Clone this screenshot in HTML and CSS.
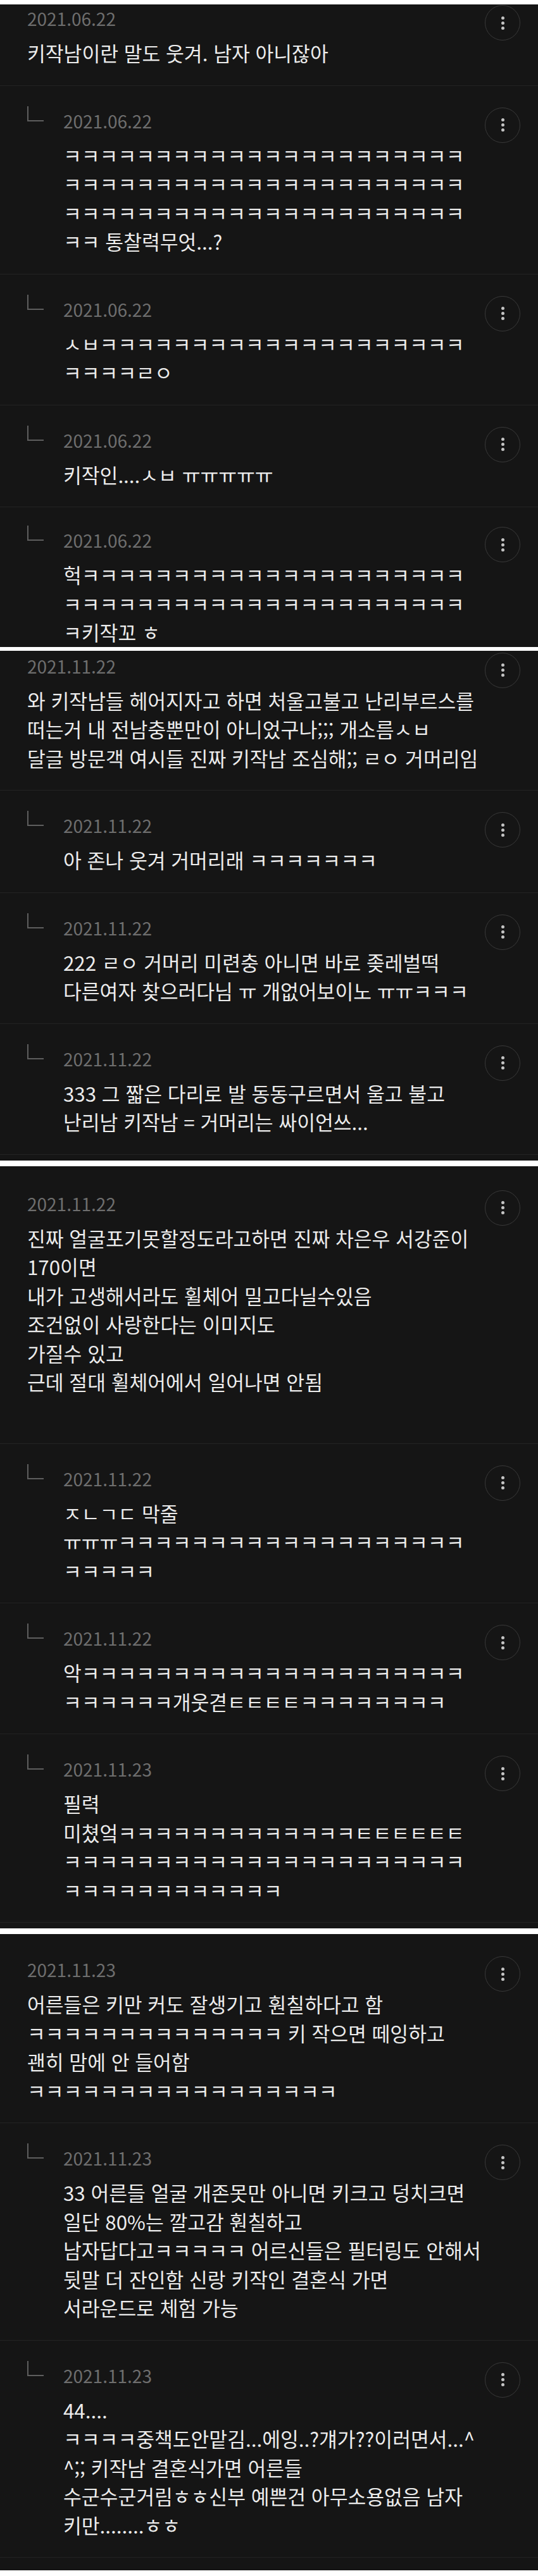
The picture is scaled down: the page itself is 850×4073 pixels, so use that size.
FILE: index.html
```html
<!DOCTYPE html>
<html lang="ko">
<head>
    <meta charset="UTF-8">
    <meta name="viewport" content="width=device-width, initial-scale=1.0">
    <title>키작남 댓글 모음</title>
    <link rel="stylesheet" href="styles.css">
</head>
<body>
    <!-- 1 -->
    <section class="shot cropped">
        <article class="comment first-cut">
            <div class="comment-body">
                <div class="comment-head">
                    <time class="comment-date">2021.06.22</time>
                    <button class="more-btn" aria-label="더보기"><i></i><i></i><i></i></button>
                </div>
                <p class="comment-text">키작남이란 말도 웃겨. 남자 아니잖아</p>
            </div>
        </article>
        <article class="comment reply">
            <svg class="reply-mark" viewBox="0 0 26 24"><path d="M1 0V23H26"/></svg>
            <div class="comment-body">
                <div class="comment-head">
                    <time class="comment-date">2021.06.22</time>
                    <button class="more-btn" aria-label="더보기"><i></i><i></i><i></i></button>
                </div>
                <p class="comment-text">ㅋㅋㅋㅋㅋㅋㅋㅋㅋㅋㅋㅋㅋㅋㅋㅋㅋㅋㅋㅋㅋㅋ<br>ㅋㅋㅋㅋㅋㅋㅋㅋㅋㅋㅋㅋㅋㅋㅋㅋㅋㅋㅋㅋㅋㅋ<br>ㅋㅋㅋㅋㅋㅋㅋㅋㅋㅋㅋㅋㅋㅋㅋㅋㅋㅋㅋㅋㅋㅋ<br>ㅋㅋ 통찰력무엇...?</p>
            </div>
        </article>
        <article class="comment reply">
            <svg class="reply-mark" viewBox="0 0 26 24"><path d="M1 0V23H26"/></svg>
            <div class="comment-body">
                <div class="comment-head">
                    <time class="comment-date">2021.06.22</time>
                    <button class="more-btn" aria-label="더보기"><i></i><i></i><i></i></button>
                </div>
                <p class="comment-text">ㅅㅂㅋㅋㅋㅋㅋㅋㅋㅋㅋㅋㅋㅋㅋㅋㅋㅋㅋㅋㅋㅋ<br>ㅋㅋㅋㅋㄹㅇ</p>
            </div>
        </article>
        <article class="comment reply">
            <svg class="reply-mark" viewBox="0 0 26 24"><path d="M1 0V23H26"/></svg>
            <div class="comment-body">
                <div class="comment-head">
                    <time class="comment-date">2021.06.22</time>
                    <button class="more-btn" aria-label="더보기"><i></i><i></i><i></i></button>
                </div>
                <p class="comment-text">키작인....ㅅㅂ ㅠㅠㅠㅠㅠ</p>
            </div>
        </article>
        <article class="comment reply last-cut">
            <svg class="reply-mark" viewBox="0 0 26 24"><path d="M1 0V23H26"/></svg>
            <div class="comment-body">
                <div class="comment-head">
                    <time class="comment-date">2021.06.22</time>
                    <button class="more-btn" aria-label="더보기"><i></i><i></i><i></i></button>
                </div>
                <p class="comment-text">헉ㅋㅋㅋㅋㅋㅋㅋㅋㅋㅋㅋㅋㅋㅋㅋㅋㅋㅋㅋㅋㅋ<br>ㅋㅋㅋㅋㅋㅋㅋㅋㅋㅋㅋㅋㅋㅋㅋㅋㅋㅋㅋㅋㅋㅋ<br>ㅋ키작꼬 ㅎ</p>
            </div>
        </article>
    </section>

    <!-- 2 -->
    <section class="shot">
        <article class="comment first-cut loose">
            <div class="comment-body">
                <div class="comment-head">
                    <time class="comment-date">2021.11.22</time>
                    <button class="more-btn" aria-label="더보기"><i></i><i></i><i></i></button>
                </div>
                <p class="comment-text">와 키작남들 헤어지자고 하면 처울고불고 난리부르스를<br>떠는거 내 전남충뿐만이 아니었구나;;; 개소름ㅅㅂ<br>달글 방문객 여시들 진짜 키작남 조심해;; ㄹㅇ 거머리임</p>
            </div>
        </article>
        <article class="comment reply">
            <svg class="reply-mark" viewBox="0 0 26 24"><path d="M1 0V23H26"/></svg>
            <div class="comment-body">
                <div class="comment-head">
                    <time class="comment-date">2021.11.22</time>
                    <button class="more-btn" aria-label="더보기"><i></i><i></i><i></i></button>
                </div>
                <p class="comment-text">아 존나 웃겨 거머리래 ㅋㅋㅋㅋㅋㅋㅋ</p>
            </div>
        </article>
        <article class="comment reply">
            <svg class="reply-mark" viewBox="0 0 26 24"><path d="M1 0V23H26"/></svg>
            <div class="comment-body">
                <div class="comment-head">
                    <time class="comment-date">2021.11.22</time>
                    <button class="more-btn" aria-label="더보기"><i></i><i></i><i></i></button>
                </div>
                <p class="comment-text">222 ㄹㅇ 거머리 미련충 아니면 바로 좆레벌떡<br>다른여자 찾으러다님 ㅠ 개없어보이노 ㅠㅠㅋㅋㅋ</p>
            </div>
        </article>
        <article class="comment reply">
            <svg class="reply-mark" viewBox="0 0 26 24"><path d="M1 0V23H26"/></svg>
            <div class="comment-body">
                <div class="comment-head">
                    <time class="comment-date">2021.11.22</time>
                    <button class="more-btn" aria-label="더보기"><i></i><i></i><i></i></button>
                </div>
                <p class="comment-text">333 그 짧은 다리로 발 동동구르면서 울고 불고<br>난리남 키작남 = 거머리는 싸이언쓰...</p>
            </div>
        </article>
    </section>

    <!-- 3 -->
    <section class="shot">
        <article class="comment first roomy">
            <div class="comment-body">
                <div class="comment-head">
                    <time class="comment-date">2021.11.22</time>
                    <button class="more-btn" aria-label="더보기"><i></i><i></i><i></i></button>
                </div>
                <p class="comment-text">진짜 얼굴포기못할정도라고하면 진짜 차은우 서강준이<br>170이면<br>내가 고생해서라도 휠체어 밀고다닐수있음<br>조건없이 사랑한다는 이미지도<br>가질수 있고<br>근데 절대 휠체어에서 일어나면 안됨</p>
            </div>
        </article>
        <article class="comment reply">
            <svg class="reply-mark" viewBox="0 0 26 24"><path d="M1 0V23H26"/></svg>
            <div class="comment-body">
                <div class="comment-head">
                    <time class="comment-date">2021.11.22</time>
                    <button class="more-btn" aria-label="더보기"><i></i><i></i><i></i></button>
                </div>
                <p class="comment-text">ㅈㄴㄱㄷ 막줄<br>ㅠㅠㅠㅋㅋㅋㅋㅋㅋㅋㅋㅋㅋㅋㅋㅋㅋㅋㅋㅋㅋㅋ<br>ㅋㅋㅋㅋㅋ</p>
            </div>
        </article>
        <article class="comment reply">
            <svg class="reply-mark" viewBox="0 0 26 24"><path d="M1 0V23H26"/></svg>
            <div class="comment-body">
                <div class="comment-head">
                    <time class="comment-date">2021.11.22</time>
                    <button class="more-btn" aria-label="더보기"><i></i><i></i><i></i></button>
                </div>
                <p class="comment-text">악ㅋㅋㅋㅋㅋㅋㅋㅋㅋㅋㅋㅋㅋㅋㅋㅋㅋㅋㅋㅋㅋ<br>ㅋㅋㅋㅋㅋㅋ개웃겯ㅌㅌㅌㅌㅋㅋㅋㅋㅋㅋㅋㅋ</p>
            </div>
        </article>
        <article class="comment reply">
            <svg class="reply-mark" viewBox="0 0 26 24"><path d="M1 0V23H26"/></svg>
            <div class="comment-body">
                <div class="comment-head">
                    <time class="comment-date">2021.11.23</time>
                    <button class="more-btn" aria-label="더보기"><i></i><i></i><i></i></button>
                </div>
                <p class="comment-text">필력<br>미쳤엌ㅋㅋㅋㅋㅋㅋㅋㅋㅋㅋㅋㅋㅋㅌㅌㅌㅌㅌㅌ<br>ㅋㅋㅋㅋㅋㅋㅋㅋㅋㅋㅋㅋㅋㅋㅋㅋㅋㅋㅋㅋㅋㅋ<br>ㅋㅋㅋㅋㅋㅋㅋㅋㅋㅋㅋㅋ</p>
            </div>
        </article>
    </section>

    <!-- 4 -->
    <section class="shot tail">
        <article class="comment first-alt">
            <div class="comment-body">
                <div class="comment-head">
                    <time class="comment-date">2021.11.23</time>
                    <button class="more-btn" aria-label="더보기"><i></i><i></i><i></i></button>
                </div>
                <p class="comment-text">어른들은 키만 커도 잘생기고 훤칠하다고 함<br>ㅋㅋㅋㅋㅋㅋㅋㅋㅋㅋㅋㅋㅋㅋ 키 작으면 떼잉하고<br>괜히 맘에 안 들어함<br>ㅋㅋㅋㅋㅋㅋㅋㅋㅋㅋㅋㅋㅋㅋㅋㅋㅋ</p>
            </div>
        </article>
        <article class="comment reply">
            <svg class="reply-mark" viewBox="0 0 26 24"><path d="M1 0V23H26"/></svg>
            <div class="comment-body">
                <div class="comment-head">
                    <time class="comment-date">2021.11.23</time>
                    <button class="more-btn" aria-label="더보기"><i></i><i></i><i></i></button>
                </div>
                <p class="comment-text">33 어른들 얼굴 개존못만 아니면 키크고 덩치크면<br>일단 80%는 깔고감 훤칠하고<br>남자답다고ㅋㅋㅋㅋㅋ 어르신들은 필터링도 안해서<br>뒷말 더 잔인함 신랑 키작인 결혼식 가면<br>서라운드로 체험 가능</p>
            </div>
        </article>
        <article class="comment reply">
            <svg class="reply-mark" viewBox="0 0 26 24"><path d="M1 0V23H26"/></svg>
            <div class="comment-body">
                <div class="comment-head">
                    <time class="comment-date">2021.11.23</time>
                    <button class="more-btn" aria-label="더보기"><i></i><i></i><i></i></button>
                </div>
                <p class="comment-text">44....<br>ㅋㅋㅋㅋ중책도안맡김...에잉..?걔가??이러면서...^<br>^;; 키작남 결혼식가면 어른들<br>수군수군거림ㅎㅎ신부 예쁜건 아무소용없음 남자<br>키만........ㅎㅎ</p>
            </div>
        </article>
    </section>
</body>
</html>
```

FILE: styles.css
```css
* {
    margin: 0;
    padding: 0;
    box-sizing: border-box;
}

body {
    font-family: "Noto Sans CJK KR", "Noto Sans", sans-serif;
    background-color: #ffffff;
    padding: 7px 0 10px;
    overflow-x: hidden;
}

/* one captured screen */
.shot {
    background-color: #151515;
    padding-bottom: 9px;
    margin-bottom: 9px;
    overflow: hidden;
}

.shot:last-child {
    margin-bottom: 0;
}

.shot.cropped {
    padding-bottom: 0;
    margin-bottom: 6px;
}

.shot.tail {
    padding-bottom: 20px;
}

/* comment row */
.comment {
    display: flex;
    padding: 35px 28px 28px 43px;
    border-bottom: 1px solid #232323;
}

.comment.first-cut { padding-top: 2px; }
.comment.first-cut.loose { padding-top: 4px; }
.comment.first { padding-top: 39px; }
.comment.first-alt { padding-top: 36px; }
.comment.roomy { padding-bottom: 74px; }

.comment.last-cut {
    padding-top: 32px;
    padding-bottom: 0;
    border-bottom: none;
}

.reply-mark {
    flex: none;
    width: 26px;
    height: 24px;
    margin: -3px 31px 0 0;
}

.reply-mark path {
    fill: none;
    stroke: #5e5e5e;
    stroke-width: 2;
}

.comment-body {
    flex: 1;
    min-width: 0;
}

.comment-head {
    display: flex;
    justify-content: space-between;
    align-items: flex-start;
    height: 40px;
}

.comment-date {
    font-size: 28px;
    line-height: 40px;
    color: #6e6e6e;
}

.more-btn {
    flex: none;
    display: flex;
    flex-direction: column;
    align-items: center;
    justify-content: center;
    gap: 3px;
    width: 56px;
    height: 56px;
    margin-top: -1px;
    border: 1.5px solid #393939;
    border-radius: 50%;
    background: transparent;
    cursor: pointer;
}

.more-btn i {
    display: block;
    width: 5px;
    height: 5px;
    border-radius: 50%;
    background-color: #c4c4c4;
}

.comment-text {
    margin-top: 12px;
    font-size: 31.3px;
    line-height: 45.5px;
    color: #ececec;
    white-space: nowrap;
}
```
